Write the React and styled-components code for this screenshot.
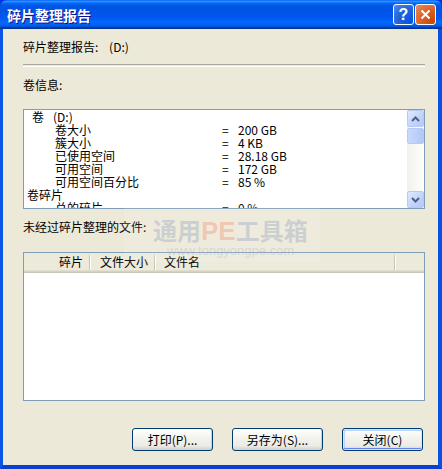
import React from "react"
import styled, { createGlobalStyle } from "styled-components"

const GlobalStyle = createGlobalStyle`
  html, body {
    margin: 0;
    padding: 0;
    background: #ffffff;
  }
  body {
    font-family: "Noto Sans CJK SC", "Noto Sans", sans-serif;
    font-size: 12px;
    color: #000000;
  }
`

const volumeRows = [
  { label: "卷", drive: "(D:)", indent: 8 },
  { label: "卷大小", value: "200 GB", indent: 31 },
  { label: "簇大小", value: "4 KB", indent: 31 },
  { label: "已使用空间", value: "28.18 GB", indent: 31 },
  { label: "可用空间", value: "172 GB", indent: 31 },
  { label: "可用空间百分比", value: "85 %", indent: 31 },
  { label: "卷碎片", indent: 3 },
  { label: "总的碎片", value: "0 %", indent: 31 },
  { label: "文件碎片", value: "0 %", indent: 31 },
]

const Window = styled.div`
  position: relative;
  width: 442px;
  height: 469px;
  display: flex;
  flex-direction: column;
  overflow: hidden;
  background: #0831d9;
`

const TitleBar = styled.div`
  flex: none;
  height: 29px;
  display: flex;
  align-items: center;
  padding: 0 6px 0 7px;
  border-radius: 7px 7px 0 0;
  background: linear-gradient(
    to bottom,
    #0058ee 0%,
    #3593ff 4%,
    #288eff 6%,
    #127dff 8%,
    #036ffc 10%,
    #0262ee 14%,
    #0057e5 20%,
    #0054e3 24%,
    #0055eb 56%,
    #005bf5 66%,
    #026afe 76%,
    #0062ef 86%,
    #0052d6 92%,
    #0040ab 94%,
    #003092 100%
  );
`

const Title = styled.div`
  flex: 1;
  color: #ffffff;
  font-size: 14px;
  font-weight: 700;
  text-shadow: 1px 1px #0f1089;
`

const Controls = styled.div`
  display: flex;
  gap: 1px;
`

const CtrlButton = styled.div`
  width: 21px;
  height: 21px;
  box-sizing: border-box;
  border: 1px solid #ffffff;
  border-radius: 3px;
  display: flex;
  align-items: center;
  justify-content: center;
  color: #ffffff;
  font-family: "Liberation Sans", sans-serif;
  font-weight: 700;
  font-size: 16px;
  background: ${p =>
    p.$danger
      ? "radial-gradient(circle at 90% 90%, #cc4600 0%, #dc6527 55%, #e88d66 100%)"
      : "radial-gradient(circle at 90% 90%, #0054e9 0%, #2263d5 55%, #4d8bf2 100%)"};
`

const Body = styled.div`
  flex: 1;
  display: flex;
  flex-direction: column;
  background: #ece9d8;
  border-left: 3px solid #0b55e6;
  border-right: 4px solid #0b4fe0;
  border-bottom: 4px solid #0a3fd0;
  padding: 11px 13px 0 20px;
`

const Label = styled.div`
  height: 14px;
  line-height: 14px;
  margin-top: ${p => p.$top || 0}px;
  white-space: pre;
`

const Separator = styled.div`
  margin-top: 10px;
  height: 1px;
  border-top: 1px solid #aca899;
  border-bottom: 1px solid #ffffff;
`

const ListBox = styled.div`
  margin-top: 17px;
  height: 100px;
  box-sizing: border-box;
  border: 1px solid #7f9db9;
  background: #ffffff;
  display: flex;
  overflow: hidden;
`

const ListContent = styled.div`
  flex: 1;
  overflow: hidden;
`

const Row = styled.div`
  display: grid;
  grid-template-columns: 198px 16px 1fr;
  height: 13px;
  line-height: 13px;
  white-space: nowrap;
`

const RowLabel = styled.span`
  padding-left: ${p => p.$indent}px;
`

const Drive = styled.span`
  margin-left: 9px;
`

const ScrollBar = styled.div`
  width: 17px;
  flex: none;
  display: flex;
  flex-direction: column;
  background: linear-gradient(to right, #f3f1ec, #fefefb);
`

const ScrollBtn = styled.div`
  height: 17px;
  box-sizing: border-box;
  border: 1px solid #b7caf5;
  border-radius: 2px;
  background: linear-gradient(to bottom right, #e1eafe, #c1d3fb 60%, #b4c8f6);
  display: flex;
  align-items: center;
  justify-content: center;
  margin-top: ${p => (p.$push ? "auto" : "0")};
`

const Thumb = styled.div`
  height: 16px;
  margin-top: 1px;
  box-sizing: border-box;
  border: 1px solid #b7caf5;
  border-radius: 2px;
  background: linear-gradient(to right, #c9d8fc, #bccff8 60%, #b0c6f6);
`

const ListView = styled.div`
  margin-top: 18px;
  height: 149px;
  box-sizing: border-box;
  border: 1px solid #7f9db9;
  background: #ffffff;
  overflow: hidden;
`

const Header = styled.div`
  height: 20px;
  display: flex;
  align-items: center;
  background: #ebeadb;
  box-shadow: inset 0 -1px #cbc7b8, inset 0 -2px #d6d2c2, inset 0 -3px #e2decd;
  padding-bottom: 2px;
  box-sizing: border-box;
`

const HeaderCell = styled.div`
  width: ${p => p.$width}px;
  flex: ${p => (p.$grow ? 1 : "none")};
  box-sizing: border-box;
  text-align: ${p => p.$align || "left"};
  padding: 0 ${p => (p.$align === "right" ? 6 : 0)}px 0 ${p => (p.$align === "right" ? 0 : 9)}px;
  line-height: 14px;
  white-space: nowrap;
`

const Divider = styled.div`
  width: 1px;
  height: 15px;
  flex: none;
  background: #c7c5b2;
  box-shadow: 1px 0 #ffffff;
`

const Footer = styled.div`
  margin-top: 27px;
  display: flex;
  justify-content: flex-end;
  gap: 19px;
  padding-right: 2px;
`

const Button = styled.button`
  width: ${p => p.$width}px;
  height: 23px;
  box-sizing: border-box;
  border: 1px solid #003c74;
  border-radius: 3px;
  font-family: inherit;
  font-size: 12px;
  color: #000000;
  padding: 0;
  background: linear-gradient(to bottom, #ffffff 0%, #f3f3ef 40%, #ecebe6 80%, #d6d0c5 100%);
  box-shadow: ${p =>
    p.$default
      ? "inset 0 0 0 1px #cee7ff, inset 0 -1px 0 1px #6982ee, inset 1px 1px 0 1px #bcd4f6"
      : "inset -1px -1px #d6d0c5"};
`

const Watermark = styled.div`
  position: absolute;
  left: 124px;
  top: 200px;
  width: 196px;
  height: 62px;
  box-sizing: border-box;
  padding-left: 29px;
  background: rgba(255, 255, 255, 0.1);
  display: flex;
  flex-direction: column;
  pointer-events: none;
`

const MarkTitle = styled.div`
  margin-top: 17px;
  font-size: 24px;
  line-height: 26px;
  font-weight: 700;
  white-space: nowrap;
  color: rgba(150, 170, 195, 0.42);
`

const MarkPE = styled.span`
  font-family: "Liberation Sans", sans-serif;
  font-size: 26px;
  color: rgba(245, 140, 110, 0.38);
`

const MarkUrl = styled.div`
  font-family: "Liberation Sans", sans-serif;
  font-size: 13px;
  line-height: 14px;
  margin-left: 14px;
  color: rgba(160, 170, 185, 0.32);
`

const Arrow = ({ up }) => (
  <svg width="9" height="6" viewBox="0 0 9 6">
    <path
      d={up ? "M1 5 L4.5 1.5 L8 5" : "M1 1 L4.5 4.5 L8 1"}
      fill="none"
      stroke="#4d6185"
      strokeWidth="2"
    />
  </svg>
)

const CloseGlyph = () => (
  <svg width="11" height="11" viewBox="0 0 11 11">
    <path d="M1.5 1.5 L9.5 9.5 M9.5 1.5 L1.5 9.5" stroke="#ffffff" strokeWidth="2" />
  </svg>
)

export default function App() {
  return (
    <Window>
      <GlobalStyle />
      <TitleBar>
        <Title>碎片整理报告</Title>
        <Controls>
          <CtrlButton>?</CtrlButton>
          <CtrlButton $danger>
            <CloseGlyph />
          </CtrlButton>
        </Controls>
      </TitleBar>
      <Body>
        <Label>{"碎片整理报告:    (D:)"}</Label>
        <Separator />
        <Label $top={11}>卷信息:</Label>
        <ListBox>
          <ListContent>
            {volumeRows.map((row, i) => (
              <Row key={i}>
                <RowLabel $indent={row.indent}>
                  {row.label}
                  {row.drive && <Drive>{row.drive}</Drive>}
                </RowLabel>
                <span>{row.value ? "=" : ""}</span>
                <span>{row.value || ""}</span>
              </Row>
            ))}
          </ListContent>
          <ScrollBar>
            <ScrollBtn>
              <Arrow up />
            </ScrollBtn>
            <Thumb />
            <ScrollBtn $push>
              <Arrow />
            </ScrollBtn>
          </ScrollBar>
        </ListBox>
        <Label $top={11}>未经过碎片整理的文件:</Label>
        <ListView>
          <Header>
            <HeaderCell $width={65} $align="right">碎片</HeaderCell>
            <Divider />
            <HeaderCell $width={64} $align="right">文件大小</HeaderCell>
            <Divider />
            <HeaderCell $width={239}>文件名</HeaderCell>
            <Divider />
            <HeaderCell $grow />
          </Header>
        </ListView>
        <Footer>
          <Button $width={81}>打印(P)...</Button>
          <Button $width={91}>另存为(S)...</Button>
          <Button $width={81} $default>关闭(C)</Button>
        </Footer>
      </Body>
      <Watermark>
        <MarkTitle>
          通用<MarkPE>PE</MarkPE>工具箱
        </MarkTitle>
        <MarkUrl>www.tongyongpe.com</MarkUrl>
      </Watermark>
    </Window>
  )
}
